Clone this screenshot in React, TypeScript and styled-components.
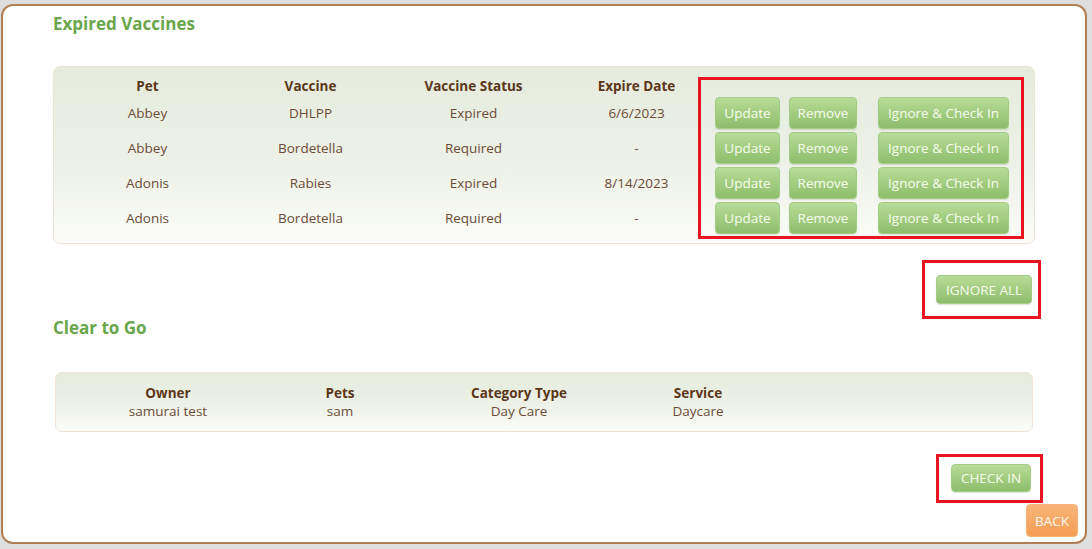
import React from "react";
import styled, { createGlobalStyle } from "styled-components";

const GlobalStyle = createGlobalStyle`
  html, body {
    margin: 0;
    padding: 0;
    background: #dedede;
  }
  body {
    font-family: "Open Sans", "Noto Sans", Arial, sans-serif;
  }
  * {
    box-sizing: border-box;
  }
`;

const Frame = styled.div`
  width: 1086px;
  height: 540px;
  margin: 4px 0 0 1px;
  background: #fff;
  border: 2px solid #b27f55;
  border-radius: 12px;
  display: flex;
  flex-direction: column;
`;

const Content = styled.div`
  padding: 0 50px;
  display: flex;
  flex-direction: column;
`;

const SectionTitle = styled.h2<{ $top: number }>`
  margin: ${(p) => p.$top}px 0 0 0;
  font-size: 17px;
  line-height: 24px;
  font-weight: 700;
  color: #6aa64b;
`;

const Card = styled.div<{ $top: number; $inset?: number }>`
  position: relative;
  margin: ${(p) => p.$top}px ${(p) => p.$inset ?? 0}px 0;
  border: 1px solid #efe3d6;
  border-radius: 7px;
  background: linear-gradient(to bottom, #e5ebdd 0%, #edf1e7 55%, #fbfcf8 100%);
`;

const VaccineGrid = styled.div`
  display: grid;
  grid-template-columns: repeat(4, 163px) 1fr;
  grid-template-rows: 18px;
  grid-auto-rows: 35px;
  padding: 10px 12px 8px 12px;
`;

const HeadCell = styled.div`
  height: 18px;
  line-height: 18px;
  text-align: center;
  font-size: 13.5px;
  font-weight: 700;
  color: #5a3719;
`;

const Cell = styled.div`
  display: flex;
  align-items: center;
  justify-content: center;
  font-size: 13.5px;
  color: #6b4c39;
`;

const Actions = styled.div`
  display: flex;
  align-items: center;
  margin-left: -3px;
`;

const GreenButton = styled.button<{ $w: number; $h?: number; $gap?: number; $upper?: boolean }>`
  width: ${(p) => p.$w}px;
  height: ${(p) => p.$h ?? 32}px;
  margin-left: ${(p) => p.$gap ?? 0}px;
  padding: 0;
  border: 1px solid #a3cc85;
  border-radius: 4px;
  background: linear-gradient(to bottom, #b8db99 0%, #a2cd81 50%, #8dbe6c 100%);
  color: #f6fcee;
  font-family: "Open Sans", "Noto Sans", Arial, sans-serif;
  font-size: 13.5px;
  text-transform: ${(p) => (p.$upper ? "uppercase" : "none")};
  box-shadow: 0 1px 1px rgba(120, 150, 100, 0.25);
  cursor: pointer;
`;

const OrangeButton = styled.button`
  width: 52px;
  height: 33px;
  padding: 0;
  border: 1px solid #f6b27a;
  border-radius: 4px;
  background: linear-gradient(to bottom, #f8b577 0%, #f39d55 100%);
  color: #fff7ef;
  font-family: "Open Sans", "Noto Sans", Arial, sans-serif;
  font-size: 13.5px;
  cursor: pointer;
`;

const Marker = styled.div<{ $t: number; $l: number; $w: number; $h: number }>`
  position: absolute;
  top: ${(p) => p.$t}px;
  left: ${(p) => p.$l}px;
  width: ${(p) => p.$w}px;
  height: ${(p) => p.$h}px;
  border: 3px solid #e8141f;
  pointer-events: none;
`;

const ButtonRow = styled.div<{ $top: number; $right: number }>`
  display: flex;
  justify-content: flex-end;
  margin: ${(p) => p.$top}px ${(p) => p.$right}px 0 0;
`;

const Marked = styled.div`
  position: relative;
  display: flex;
`;

const OwnerGrid = styled.div`
  display: grid;
  grid-template-columns: 224px 120px 238px 120px 1fr;
  padding: 11px 0 11px 0;
`;

const OwnerHead = styled(HeadCell)``;

const OwnerValue = styled.div`
  height: 18px;
  line-height: 18px;
  text-align: center;
  font-size: 13.5px;
  color: #6b4c39;
`;

const Footer = styled.div`
  display: flex;
  justify-content: flex-end;
  padding: 12px 7px 0 0;
`;

const vaccines = [
  { pet: "Abbey", vaccine: "DHLPP", status: "Expired", expire: "6/6/2023" },
  { pet: "Abbey", vaccine: "Bordetella", status: "Required", expire: "-" },
  { pet: "Adonis", vaccine: "Rabies", status: "Expired", expire: "8/14/2023" },
  { pet: "Adonis", vaccine: "Bordetella", status: "Required", expire: "-" },
];

const clear = [{ owner: "samurai test", pets: "sam", category: "Day Care", service: "Daycare" }];

export default function App() {
  return (
    <>
      <GlobalStyle />
      <Frame>
        <Content>
          <SectionTitle $top={6}>Expired Vaccines</SectionTitle>

          <Card $top={30}>
            <VaccineGrid>
              <HeadCell>Pet</HeadCell>
              <HeadCell>Vaccine</HeadCell>
              <HeadCell>Vaccine Status</HeadCell>
              <HeadCell>Expire Date</HeadCell>
              <div />
              {vaccines.map((v, i) => (
                <React.Fragment key={i}>
                  <Cell>{v.pet}</Cell>
                  <Cell>{v.vaccine}</Cell>
                  <Cell>{v.status}</Cell>
                  <Cell>{v.expire}</Cell>
                  <Actions>
                    <GreenButton $w={65}>Update</GreenButton>
                    <GreenButton $w={68} $gap={9}>Remove</GreenButton>
                    <GreenButton $w={131} $gap={21}>Ignore &amp; Check In</GreenButton>
                  </Actions>
                </React.Fragment>
              ))}
            </VaccineGrid>
            <Marker $t={10} $l={644} $w={326} $h={162} />
          </Card>

          <ButtonRow $top={31} $right={3}>
            <Marked>
              <GreenButton $w={96} $h={29} $upper>Ignore All</GreenButton>
              <Marker $t={-15} $l={-14} $w={119} $h={59} />
            </Marked>
          </ButtonRow>

          <SectionTitle $top={12}>Clear to Go</SectionTitle>

          <Card $top={32} $inset={2}>
            <OwnerGrid>
              <OwnerHead>Owner</OwnerHead>
              <OwnerHead>Pets</OwnerHead>
              <OwnerHead>Category Type</OwnerHead>
              <OwnerHead>Service</OwnerHead>
              <div />
              {clear.map((c, i) => (
                <React.Fragment key={i}>
                  <OwnerValue>{c.owner}</OwnerValue>
                  <OwnerValue>{c.pets}</OwnerValue>
                  <OwnerValue>{c.category}</OwnerValue>
                  <OwnerValue>{c.service}</OwnerValue>
                  <div />
                </React.Fragment>
              ))}
            </OwnerGrid>
          </Card>

          <ButtonRow $top={32} $right={4}>
            <Marked>
              <GreenButton $w={80} $h={28} $upper>Check In</GreenButton>
              <Marker $t={-10} $l={-15} $w={107} $h={49} />
            </Marked>
          </ButtonRow>
        </Content>
        <Footer>
          <OrangeButton>BACK</OrangeButton>
        </Footer>
      </Frame>
    </>
  );
}
